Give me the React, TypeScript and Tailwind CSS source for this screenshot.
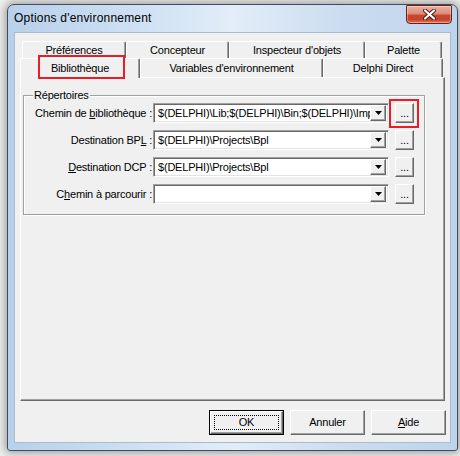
import type { FC, ReactNode } from 'react';

// Classic Win32 3D edges
const raised = 'border-t border-l border-t-white border-l-white border-r border-b border-r-[#696969] border-b-[#696969] shadow-[inset_-1px_-1px_0_#a0a0a0]';
const sunken = 'border-t border-l border-t-[#a0a0a0] border-l-[#a0a0a0] border-r border-b border-r-white border-b-white shadow-[inset_1px_1px_0_#696969,inset_-1px_-1px_0_#e3e3e3]';
const tabEdge = 'border-t border-l border-t-white border-l-white border-r border-r-[#696969] shadow-[inset_-1px_0_0_#a0a0a0] rounded-t-[2px]';

const RedMark: FC<{ className: string }> = ({ className }) => (
  <div className={`pointer-events-none absolute border-2 border-[#ed1c24] ${className}`} />
);

const CloseButton: FC = () => (
  <div className="flex h-[19px] w-[46px] items-center justify-center rounded-b-[4px] rounded-t-[1px] border border-[#6b2216] bg-[linear-gradient(180deg,#eab0a2_0%,#de8c78_45%,#c9472f_55%,#c7432b_80%,#e07a5c_100%)] shadow-[inset_0_0_0_1px_rgba(255,255,255,0.35)]">
    <svg width="13" height="11" viewBox="0 0 13 11">
      <path d="M2 1.5l9 8M11 1.5l-9 8" stroke="#4a1a12" strokeWidth="4" strokeLinecap="round" />
      <path d="M2 1.5l9 8M11 1.5l-9 8" stroke="#ffffff" strokeWidth="2.2" strokeLinecap="round" />
    </svg>
  </div>
);

const BackTab: FC<{ label: string; className: string }> = ({ label, className }) => (
  <div className={`flex h-full items-center justify-center pt-px ${tabEdge} ${className}`}>{label}</div>
);

const FrontTab: FC<{ label: ReactNode; className: string; selected?: boolean }> = ({ label, className, selected }) => (
  <div
    className={`relative flex items-center justify-center ${tabEdge} ${className} ${
      selected ? 'z-10 -mb-px h-[20px] bg-[#f0f0f0]' : 'h-[19px]'
    }`}
  >
    {label}
    {selected && <RedMark className="left-[17px] -top-[4px] h-[24px] w-[87px]" />}
  </div>
);

const Combo: FC<{ value?: string }> = ({ value }) => (
  <div className={`flex h-[20px] w-[236px] items-center bg-white p-[2px] ${sunken}`}>
    <div className="min-w-0 flex-1 overflow-hidden whitespace-nowrap pl-[2px] leading-none">{value}</div>
    <div className={`flex h-[16px] w-[16px] shrink-0 items-center justify-center bg-[#f0f0f0] ${raised}`}>
      <svg width="7" height="4" viewBox="0 0 7 4">
        <path d="M0 0h7L3.5 4z" fill="#000" />
      </svg>
    </div>
  </div>
);

const Ellipsis: FC<{ marked?: boolean }> = ({ marked }) => (
  <div className="relative ml-[6px]">
    <div className={`flex h-[20px] w-[19px] items-end justify-center bg-[#f0f0f0] pb-[3px] leading-none ${raised}`}>...</div>
    {marked && <RedMark className="-left-[6px] -top-[4px] h-[29px] w-[30px]" />}
  </div>
);

interface PathRow {
  label: ReactNode;
  value?: string;
  marked?: boolean;
}

const rows: PathRow[] = [
  { label: <>Chemin de <u>b</u>ibliothèque :</>, value: '$(DELPHI)\\Lib;$(DELPHI)\\Bin;$(DELPHI)\\Imports;$(DELPHI)\\Projects\\Bpl', marked: true },
  { label: <>Destination BP<u>L</u> :</>, value: '$(DELPHI)\\Projects\\Bpl' },
  { label: <><u>D</u>estination DCP :</>, value: '$(DELPHI)\\Projects\\Bpl' },
  { label: <>C<u>h</u>emin à parcourir :</> },
];

const Button: FC<{ children: ReactNode; isDefault?: boolean }> = ({ children, isDefault }) =>
  isDefault ? (
    <div className="h-[25px] w-[75px] border border-black">
      <div className={`flex h-full w-full items-center justify-center p-[3px] ${raised}`}>
        <div className="flex h-full w-full items-center justify-center border border-dotted border-black">{children}</div>
      </div>
    </div>
  ) : (
    <div className={`flex h-[25px] w-[75px] items-center justify-center ${raised}`}>{children}</div>
  );

export default function App() {
  return (
    <div className="h-[456px] w-[460px] overflow-hidden bg-[#efefef] pl-[7px] pt-[4px] font-['Liberation_Sans',Arial,sans-serif] text-[11px] text-black">
      {/* window frame */}
      <div className="flex h-[447px] w-[451px] flex-col rounded-t-[7px] rounded-b-[3px] border border-[#3f4d5e] bg-[linear-gradient(90deg,#b8d0ea_0%,#cfe1f4_30%,#e2edf8_50%,#cbdcf0_75%,#bdd4ed_100%)] shadow-[0_0_8px_2px_rgba(0,0,0,0.35)]">
        <div className="flex h-[27px] items-start justify-between pl-[6px] pr-[5px]">
          <span className="mt-[7px] text-[12px] leading-none tracking-[0.2px]">Options d'environnement</span>
          <CloseButton />
        </div>

        {/* client area */}
        <div className="mx-[6px] mb-[7px] flex flex-1 flex-col border border-[#a9bbcf] bg-[#f0f0f0] pb-[7px] pl-[5px] pr-[4px] pt-[8px] tracking-[-0.2px]">
          <div className="mr-[1px] flex h-[360px] flex-col">
            <div className="flex h-[17px] pl-[2px] pr-[2px]">
              <BackTab label="Préférences" className="w-[104px]" />
              <BackTab label="Concepteur" className="w-[103px]" />
              <BackTab label="Inspecteur d'objets" className="w-[136px]" />
              <BackTab label="Palette" className="w-[77px]" />
            </div>
            <div className="flex h-[19px] items-end">
              <FrontTab label="Bibliothèque" className="w-[120px]" selected />
              <FrontTab label="Variables d'environnement" className="w-[183px]" />
              <FrontTab label="Delphi Direct" className="w-[120px]" />
            </div>
            <div className="flex-1 border-b border-l border-r border-t border-b-[#696969] border-l-white border-r-[#696969] border-t-white pl-[2px] pt-[17px] shadow-[inset_-1px_-1px_0_#a0a0a0]">
              <div className="relative w-[402px] border border-[#a0a0a0] pb-[10px] pt-[7px] shadow-[inset_1px_1px_0_#fff,1px_1px_0_#fff]">
                <span className="absolute -top-[7px] left-[9px] bg-[#f0f0f0] px-[1px] leading-[13px]">Répertoires</span>
                <div className="flex flex-col gap-[7px]">
                  {rows.map((row, i) => (
                    <div key={i} className="flex items-center">
                      <div className="w-[128px] whitespace-nowrap text-right">{row.label}</div>
                      <div className="ml-[1px]">
                        <Combo value={row.value} />
                      </div>
                      <Ellipsis marked={row.marked} />
                    </div>
                  ))}
                </div>
              </div>
            </div>
          </div>

          <div className="mt-[9px] flex justify-end gap-[6px]">
            <Button isDefault>OK</Button>
            <Button>Annuler</Button>
            <Button>
              <span><u>A</u>ide</span>
            </Button>
          </div>
        </div>
      </div>
    </div>
  );
}
